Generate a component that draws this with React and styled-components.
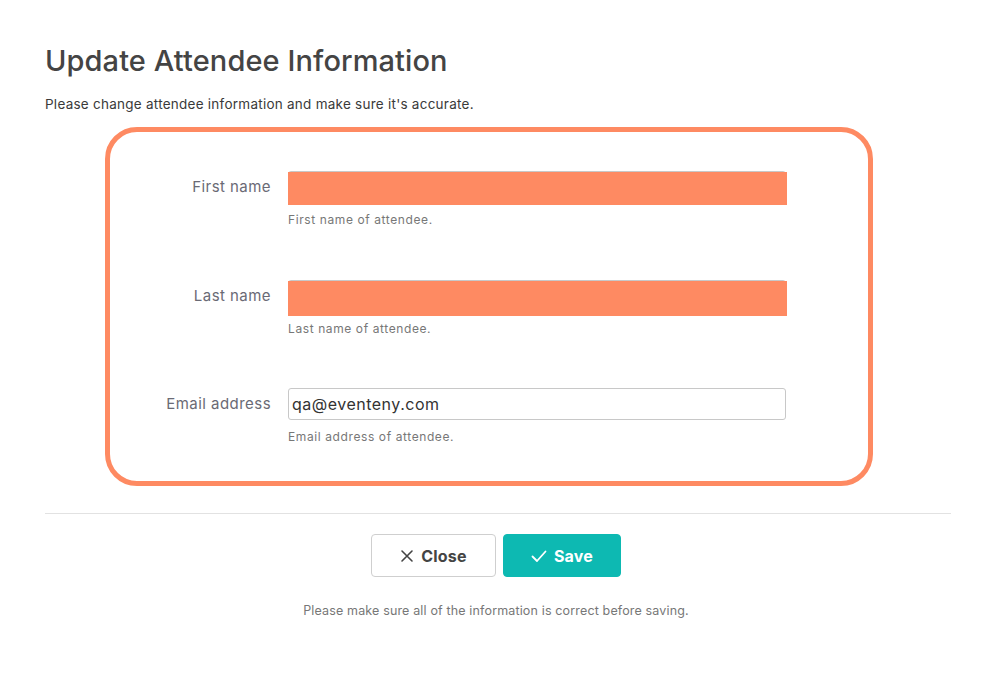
import React from "react";
import styled, { createGlobalStyle } from "styled-components";

const Global = createGlobalStyle`
  html, body { margin: 0; padding: 0; background: #fff; }
  body { font-family: Inter, "Noto Sans", sans-serif; }
  * { box-sizing: border-box; }
`;

const Page = styled.div`
  padding: 42px 45px 40px;
  display: flex;
  flex-direction: column;
`;

const Title = styled.h1`
  margin: 0;
  font-size: 29px;
  font-weight: 500;
  color: #444;
  line-height: 38px;
  letter-spacing: 0.1px;
`;

const Subtitle = styled.p`
  margin: 14px 0 0;
  font-size: 13.5px;
  color: #3a3a3a;
  line-height: 20px;
  letter-spacing: 0.25px;
`;

const Highlight = styled.div`
  margin: 13px 0 0 60px;
  width: 768px;
  border: 5px solid #fe8a62;
  border-radius: 32px;
  padding: 39px 0 35px;
  display: flex;
  flex-direction: column;
  gap: 50.5px;
`;

const Row = styled.div`
  display: grid;
  grid-template-columns: 161px 498px;
  column-gap: 17px;
  row-gap: 8px;
  align-items: center;
`;

const Label = styled.label`
  text-align: right;
  font-size: 15px;
  color: #6a6a75;
  letter-spacing: 0.45px;
  margin-top: -1px;
`;

const InputWrap = styled.div`
  position: relative;
  height: 32px;
`;

const Input = styled.input`
  width: 100%;
  height: 32px;
  border: 1px solid #c8c8c8;
  border-radius: 3px;
  padding: 0 3px;
  font-family: Inter, "Noto Sans", sans-serif;
  font-size: 16px;
  letter-spacing: 0.5px;
  color: #333;
  outline: none;
  background: #fff;
`;

const Redaction = styled.div`
  position: absolute;
  left: 0;
  right: -1px;
  top: 1px;
  height: ${(p) => p.$h}px;
  background: #fe8a62;
`;

const Help = styled.div`
  grid-column: 2;
  font-size: 12px;
  color: #777;
  line-height: 18px;
  letter-spacing: 0.6px;
`;

const Divider = styled.hr`
  margin: 27px 0 0;
  border: 0;
  border-top: 1px solid #e2e2e2;
`;

const Actions = styled.div`
  margin-top: 20px;
  display: flex;
  justify-content: center;
  gap: 7px;
  padding-right: 4px;
`;

const Button = styled.button`
  height: 43px;
  width: ${(p) => p.$w}px;
  border-radius: 4px;
  display: flex;
  align-items: center;
  justify-content: center;
  gap: 7px;
  font-family: Inter, "Noto Sans", sans-serif;
  font-size: 16px;
  font-weight: 700;
  letter-spacing: 0.2px;
  cursor: pointer;
  border: 1px solid ${(p) => (p.$primary ? "#0db9b2" : "#cfcfcf")};
  background: ${(p) => (p.$primary ? "#0db9b2" : "#fff")};
  color: ${(p) => (p.$primary ? "#fff" : "#444")};
`;

const Note = styled.p`
  margin: 26px 0 0;
  text-align: center;
  font-size: 12.5px;
  color: #777;
  letter-spacing: 0.15px;
  padding-right: 4px;
`;

const XIcon = () => (
  <svg width="14" height="14" viewBox="0 0 14 14" fill="none" stroke="#444" strokeWidth="1.6" strokeLinecap="round">
    <path d="M2 2 L12 12 M12 2 L2 12" />
  </svg>
);

const CheckIcon = () => (
  <svg width="16" height="14" viewBox="0 0 16 14" fill="none" stroke="#fff" strokeWidth="1.8" strokeLinecap="round" strokeLinejoin="round">
    <path d="M1.5 7.5 L6 12 L14.5 2.5" />
  </svg>
);

const fields = [
  { label: "First name", help: "First name of attendee.", value: "", redact: 33 },
  { label: "Last name", help: "Last name of attendee.", value: "", redact: 35 },
  { label: "Email address", help: "Email address of attendee.", value: "qa@eventeny.com" },
];

export default function App() {
  return (
    <>
      <Global />
      <Page>
        <Title>Update Attendee Information</Title>
        <Subtitle>Please change attendee information and make sure it's accurate.</Subtitle>
        <Highlight>
          {fields.map((f) => (
            <Row key={f.label}>
              <Label>{f.label}</Label>
              <InputWrap>
                <Input defaultValue={f.value} />
                {f.redact && <Redaction $h={f.redact} />}
              </InputWrap>
              <Help>{f.help}</Help>
            </Row>
          ))}
        </Highlight>
        <Divider />
        <Actions>
          <Button $w={125}>
            <XIcon />
            Close
          </Button>
          <Button $w={118} $primary>
            <CheckIcon />
            Save
          </Button>
        </Actions>
        <Note>Please make sure all of the information is correct before saving.</Note>
      </Page>
    </>
  );
}
